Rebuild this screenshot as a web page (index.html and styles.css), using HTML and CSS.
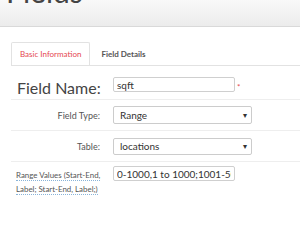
FILE: index.html
```html
<!DOCTYPE html>
<html>
<head>
<meta charset="utf-8">
<title>Fields</title>
<link rel="stylesheet" href="styles.css">
</head>
<body>
<div class="header">
  <h1>Fields</h1>
</div>

<div class="tabs">
  <div class="tab active">Basic Information</div>
  <div class="tab">Field Details</div>
</div>

<form class="fields">
  <div class="row first">
    <label class="big">Field Name:</label>
    <input class="text" type="text" value="sqft">
    <span class="req">*</span>
  </div>
  <div class="row">
    <label class="small">Field Type:</label>
    <div class="select"><span>Range</span><span class="arrow">&#9662;</span></div>
  </div>
  <div class="row">
    <label class="small">Table:</label>
    <div class="select short"><span>locations</span><span class="arrow">&#9662;</span></div>
  </div>
  <div class="row last">
    <label class="hint"><abbr>Range Values (Start-End,</abbr><br><abbr>Label; Start-End, Label;)</abbr></label>
    <input class="text" type="text" value="0-1000,1 to 1000;1001-5000,1001 to 5000">
  </div>
</form>
</body>
</html>
```

FILE: styles.css
```css
body {
  margin: 0;
  background: #fff;
  font-family: Lato, "Open Sans", sans-serif;
  color: #444;
}

.header {
  height: 26px;
  overflow: hidden;
  padding-left: 6px;
  background: linear-gradient(#f9f9f9, #ececec);
  border-bottom: 1px solid #d9d9d9;
}
.header h1 {
  margin: -24px 0 0;
  font-size: 30px;
  line-height: 30px;
  font-weight: normal;
  color: #444;
}

.tabs {
  display: flex;
  margin: 15px 0 0 11px;
  border-bottom: 1px solid #e2e2e2;
}
.tab {
  padding: 0 10px;
  height: 22px;
  line-height: 22px;
  font-size: 8px;
  font-weight: bold;
  color: #555;
  border: 1px solid transparent;
  border-bottom: none;
}
.tab.active {
  padding: 0 8px;
  color: #e5474f;
  font-weight: normal;
  background: #fff;
  border-color: #e2e2e2;
  border-radius: 2px 2px 0 0;
  margin-bottom: -1px;
}

.fields {
  margin: 0 0 0 11px;
}
.row {
  display: flex;
  align-items: center;
  height: 30px;
  border-bottom: 1px solid #eee;
}
.row.first {
  height: 29px;
  padding-top: 4px;
}
.row.last {
  align-items: flex-start;
  border-bottom: none;
  padding-top: 4px;
}
.row label {
  width: 89px;
  margin-right: 13px;
  flex: none;
  white-space: nowrap;
}
.big {
  font-size: 16px;
  padding-left: 6px;
  box-sizing: border-box;
  color: #444;
  margin-top: 5px;
}
.small {
  font-size: 9px;
  text-align: right;
  color: #555;
}
.hint {
  font-size: 7.9px;
  line-height: 13.5px;
  padding: 3px 0 0 5px;
  box-sizing: border-box;
  color: #555;
}
.hint abbr {
  text-decoration: none;
  border-bottom: 1px dotted #8ab4d8;
}

.text {
  width: 122px;
  height: 15px;
  box-sizing: border-box;
  border: 1px solid #cfcfcf;
  border-radius: 2px;
  padding: 0 3px;
  font-family: inherit;
  font-size: 10px;
  color: #333;
  outline: none;
}
.req {
  align-self: flex-start;
  color: #e5474f;
  font-size: 8px;
  margin: 12px 0 0 2px;
}

.select {
  display: flex;
  justify-content: space-between;
  align-items: center;
  width: 139px;
  height: 18px;
  box-sizing: border-box;
  border: 1px solid #ccc;
  border-radius: 2px;
  padding: 0 4px 0 6px;
  font-size: 10px;
  color: #333;
  background: #fff;
}
.select.short {
  height: 17px;
}
.arrow {
  font-size: 8px;
  color: #333;
}
```
